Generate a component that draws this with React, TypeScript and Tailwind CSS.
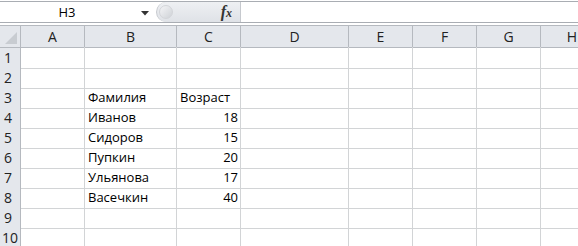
import React from "react";

const cols = ["A", "B", "C", "D", "E", "F", "G", "H"];

const data: Record<number, { b?: string; c?: string; cRight?: boolean }> = {
  3: { b: "Фамилия", c: "Возраст" },
  4: { b: "Иванов", c: "18", cRight: true },
  5: { b: "Сидоров", c: "15", cRight: true },
  6: { b: "Пупкин", c: "20", cRight: true },
  7: { b: "Ульянова", c: "17", cRight: true },
  8: { b: "Васечкин", c: "40", cRight: true },
};

const gridCols = "grid grid-cols-[21px_64px_92px_64px_108px_64px_64px_64px_1fr]";

export default function App() {
  const rows = Array.from({ length: 10 }, (_, i) => i + 1);
  return (
    <div
      className="w-[578px] h-[246px] overflow-hidden bg-white text-[13px] text-black"
      style={{ fontFamily: '"Open Sans", "Liberation Sans", sans-serif' }}
    >
      {/* Formula bar */}
      <div className="flex h-[23px] pt-[1px] items-stretch">
        <div className="flex flex-1 border-t border-b border-[#a9adb3] items-stretch">
          <div className="w-[156px] flex items-center relative">
            <span className="w-[134px] text-center leading-none">H3</span>
            <svg width="8" height="5" viewBox="0 0 8 5" className="absolute left-[141px] top-[9px]">
              <path d="M0 0 H8 L4 4.5 Z" fill="#333" />
            </svg>
          </div>
          <div className="w-[84px] relative bg-gradient-to-b from-[#eef0f3] to-[#dfe2e7] rounded-l-[10px] border-l border-[#c6c9ce] flex items-center justify-end pr-[8px]">
            <div className="absolute left-[2px] top-[3px] w-[14px] h-[14px] rounded-full bg-gradient-to-br from-[#f4f5f7] to-[#cfd2d7] border border-[#d3d5d9]" />
            <span
              className="italic font-bold text-[16px] text-[#333] leading-none"
              style={{ fontFamily: '"Liberation Serif", "DejaVu Serif", serif' }}
            >
              f<span className="text-[12px]">x</span>
            </span>
          </div>
          <div className="flex-1 bg-white border-l border-[#c6c9ce]" />
        </div>
      </div>
      <div className="h-[2px]" />
      {/* Column headers */}
      <div className={`${gridCols} h-[22px] border-t border-[#b5b9bf] bg-[#e4e7ec]`}>
        <div className="border-r border-b border-[#b5b9bf] relative">
          <svg width="14" height="14" viewBox="0 0 14 14" className="absolute right-[2px] bottom-[2px]">
            <path d="M13 1 L13 13 L1 13 Z" fill="#c8ccd1" />
          </svg>
        </div>
        {cols.map((c, i) => (
          <div
            key={c}
            className={`border-b border-[#b5b9bf] flex items-center text-[14px] ${
              i < cols.length - 1 ? "border-r justify-center" : "justify-end pr-[1px]"
            } text-[#222]`}
          >
            {c}
          </div>
        ))}
      </div>
      {/* Rows */}
      {rows.map((r) => {
        const d = data[r] || {};
        return (
          <div key={r} className={`${gridCols} h-[20px]`}>
            <div className="bg-[#e4e7ec] border-r border-b border-[#b5b9bf] flex items-center pl-[4px] text-[14px] text-[#222]">
              {r === 10 ? <span className="-ml-[2px]">10</span> : r}
            </div>
            {cols.map((c, i) => {
              let content: React.ReactNode = null;
              let right = false;
              if (c === "B") content = d.b;
              if (c === "C") {
                content = d.c;
                right = !!d.cRight;
              }
              return (
                <div
                  key={c}
                  className={`border-b border-[#d2d4d6] ${i < cols.length - 1 ? "border-r" : ""} flex items-center ${
                    right ? "justify-end pr-[2px]" : "pl-[3px]"
                  } whitespace-nowrap leading-none`}
                >
                  {content}
                </div>
              );
            })}
          </div>
        );
      })}
    </div>
  );
}
